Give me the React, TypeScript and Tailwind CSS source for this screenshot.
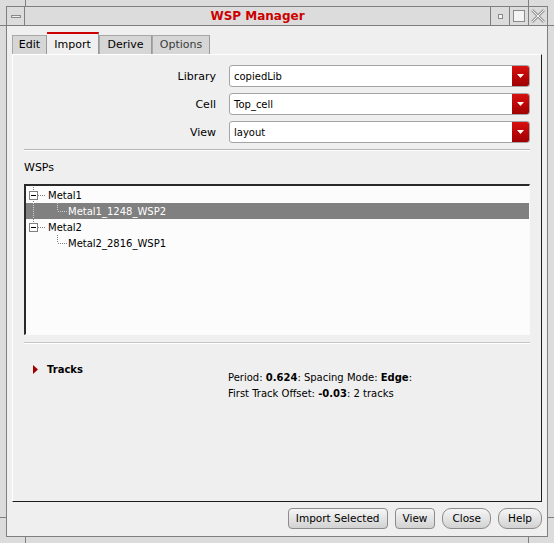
import React from 'react'

// Tree connector gutter: draws dotted guide lines and the expander box
const TreeGutter = ({ kind, selected }: { kind: 'root-first' | 'root-last' | 'child-mid' | 'child-last'; selected?: boolean }) => {
  const dot = selected ? '#d0d0d0' : '#808080'
  return (
    <svg width="44" height="16" className="shrink-0">
      {kind === 'root-first' && <line x1="7.5" y1="0" x2="7.5" y2="16" stroke={dot} strokeDasharray="1 1" />}
      {kind === 'root-last' && <line x1="7.5" y1="0" x2="7.5" y2="4" stroke={dot} strokeDasharray="1 1" />}
      {kind === 'child-mid' && <line x1="7.5" y1="0" x2="7.5" y2="16" stroke={dot} strokeDasharray="1 1" />}
      {(kind === 'child-mid' || kind === 'child-last') && (
        <>
          <line x1="31.5" y1="0" x2="31.5" y2="8" stroke={dot} strokeDasharray="1 1" />
          <line x1="32" y1="8.5" x2="42" y2="8.5" stroke={dot} strokeDasharray="1 1" />
        </>
      )}
      {(kind === 'root-first' || kind === 'root-last') && (
        <>
          <rect x="3.5" y="4.5" width="8" height="8" fill="#fff" stroke="#808080" />
          <line x1="5" y1="8.5" x2="10" y2="8.5" stroke="#000" />
          <line x1="12" y1="8.5" x2="20" y2="8.5" stroke={dot} strokeDasharray="1 1" />
        </>
      )}
    </svg>
  )
}

const Combo = ({ value }: { value: string }) => (
  <div className="h-[22px] border border-[#a4a4a4] rounded-[3px] bg-white flex items-stretch overflow-hidden">
    <div className="flex-1 pl-[4px] flex items-center text-[10px]">{value}</div>
    <div className="w-[17px] bg-linear-to-b from-[#d81010] to-[#a00000] flex items-center justify-center">
      <svg width="7" height="4">
        <polygon points="0,0 7,0 3.5,4" fill="#fff" />
      </svg>
    </div>
  </div>
)

const Btn = ({ label, pill }: { label: string; pill?: boolean }) => (
  <button
    className={
      'h-[21px] px-[7px] border border-[#8c8c8c] bg-linear-to-b from-[#f6f6f6] to-[#d2d2d2] text-[10.5px] text-black flex items-center ' +
      (pill ? 'rounded-[9px] px-[9px]' : 'rounded-[4px]')
    }
  >
    {label}
  </button>
)

export default function App() {
  const tabs = ['Edit', 'Import', 'Derive', 'Options']
  const tabWidths = ['w-[35px]', 'w-[52px]', 'w-[53px]', 'w-[58px]']

  return (
    <div className="w-[554px] h-[543px] bg-[#dcdcdc] p-[6px] font-['DejaVu_Sans',sans-serif] text-black relative">
      {/* resize corner ticks */}
      <div className="absolute left-[25px] top-0 w-px h-[6px] bg-[#7f7f7f]" />
      <div className="absolute right-[25px] top-0 w-px h-[6px] bg-[#7f7f7f]" />
      <div className="absolute left-[25px] bottom-0 w-px h-[6px] bg-[#7f7f7f]" />
      <div className="absolute right-[25px] bottom-0 w-px h-[6px] bg-[#7f7f7f]" />
      <div className="absolute left-0 top-[25px] h-px w-[6px] bg-[#7f7f7f]" />
      <div className="absolute left-0 bottom-[25px] h-px w-[6px] bg-[#7f7f7f]" />
      <div className="absolute right-0 top-[25px] h-px w-[6px] bg-[#7f7f7f]" />
      <div className="absolute right-0 bottom-[25px] h-px w-[6px] bg-[#7f7f7f]" />

      <div className="h-full border border-[#7f7f7f] flex flex-col">
        {/* Title bar */}
        <div className="h-[19px] border-b border-[#7f7f7f] flex">
          <div className="w-[18px] border-r border-[#7f7f7f] flex items-center justify-center">
            <div className="w-[10px] h-[3px] border border-[#8a8a8a] bg-[#ececec]" />
          </div>
          <div className="flex-1 flex items-center justify-center text-[12px] font-bold text-[#cc0000]">WSP Manager</div>
          <div className="w-[19px] border-l border-[#7f7f7f] flex items-center justify-center">
            <div className="w-[5px] h-[5px] border border-[#8a8a8a] bg-[#f4f4f4]" />
          </div>
          <div className="w-[19px] border-l border-[#7f7f7f] flex items-center justify-center">
            <div className="w-[12px] h-[12px] border border-[#8a8a8a] bg-[#f4f4f4]" />
          </div>
          <div className="w-[19px] border-l border-[#7f7f7f] flex items-center justify-center">
            <svg width="14" height="14">
              <path d="M1 1 L13 13 M13 1 L1 13" stroke="#9a9a9a" strokeWidth="3" />
              <path d="M1 1 L13 13 M13 1 L1 13" stroke="#f4f4f4" strokeWidth="1" />
            </svg>
          </div>
        </div>

        {/* Dialog body */}
        <div className="flex-1 bg-[#efefef] pt-[6px] pl-[5px] pr-[5px] flex flex-col">
          {/* Tabs */}
          <div className="h-[22px] flex items-end">
            {tabs.map((t, i) =>
              t === 'Import' ? (
                <div
                  key={t}
                  className={tabWidths[i] + ' h-[22px] border-t-2 border-[#cc0000] border-r border-r-[#9a9a9a] bg-[#efefef] flex items-center justify-center text-[11px] pt-[2px]'}
                >
                  {t}
                </div>
              ) : (
                <div
                  key={t}
                  className={tabWidths[i] + ' h-[19px] border-t border-l border-[#a8a8a8] border-r border-r-[#9a9a9a] bg-[#d6d6d6] flex items-center justify-center text-[11px] ' + (t === 'Options' ? 'text-[#3a3a3a]' : '')}
                >
                  {t}
                </div>
              )
            )}
          </div>

          {/* Tab panel */}
          <div className="h-[448px] border-l border-t border-white border-r border-b border-r-[#1c1c1c] border-b-[#1c1c1c] px-[11px] flex flex-col">
            <div className="grid grid-cols-[192px_1fr] gap-x-[13px] gap-y-[6px] pt-[10px] items-center">
              <div className="text-right text-[11px] pt-[2px]">Library</div>
              <Combo value="copiedLib" />
              <div className="text-right text-[11px] pt-[2px]">Cell</div>
              <Combo value="Top_cell" />
              <div className="text-right text-[11px] pt-[2px]">View</div>
              <Combo value="layout" />
            </div>

            <div className="mt-[6px] h-[2px] border-t border-[#b4b4b4] border-b border-b-white" />

            <div className="mt-[10px] text-[11px] leading-[13px]">WSPs</div>

            {/* Tree */}
            <div className="mt-[10px] h-[151px] border-t-2 border-l-2 border-[#2a2a2a] border-r border-b border-r-[#fafafa] border-b-[#fafafa] bg-[#fcfcfc] pt-[1px] text-[10px]">
              <div className="h-[16px] flex items-center">
                <TreeGutter kind="root-first" />
                <span className="-ml-[22px]">Metal1</span>
              </div>
              <div className="h-[16px] flex items-center bg-[#808080] text-white">
                <TreeGutter kind="child-mid" selected />
                <span className="-ml-[2px]">Metal1_1248_WSP2</span>
              </div>
              <div className="h-[16px] flex items-center">
                <TreeGutter kind="root-last" />
                <span className="-ml-[22px]">Metal2</span>
              </div>
              <div className="h-[16px] flex items-center">
                <TreeGutter kind="child-last" />
                <span className="-ml-[2px]">Metal2_2816_WSP1</span>
              </div>
            </div>

            <div className="mt-[7px] h-[2px] border-t border-[#c4c4c4] border-b border-b-white" />

            {/* Tracks */}
            <div className="mt-[18px] flex">
              <div className="w-[204px] flex items-center gap-[9px] pl-[9px] h-[14px]">
                <svg width="5" height="9">
                  <polygon points="0,0 5,4.5 0,9" fill="#a00000" />
                </svg>
                <span className="text-[10px] font-bold">Tracks</span>
              </div>
              <div className="pt-[8px] text-[10px] leading-[16px]">
                <div>
                  Period: <b>0.624</b>: Spacing Mode: <b>Edge</b>:
                </div>
                <div>
                  First Track Offset: <b>-0.03</b>: 2 tracks
                </div>
              </div>
            </div>
          </div>

          {/* Buttons */}
          <div className="mt-[6px] flex justify-end gap-[7px]">
            <Btn label="Import Selected" />
            <Btn label="View" />
            <Btn label="Close" pill />
            <Btn label="Help" pill />
          </div>
        </div>
      </div>
    </div>
  )
}
